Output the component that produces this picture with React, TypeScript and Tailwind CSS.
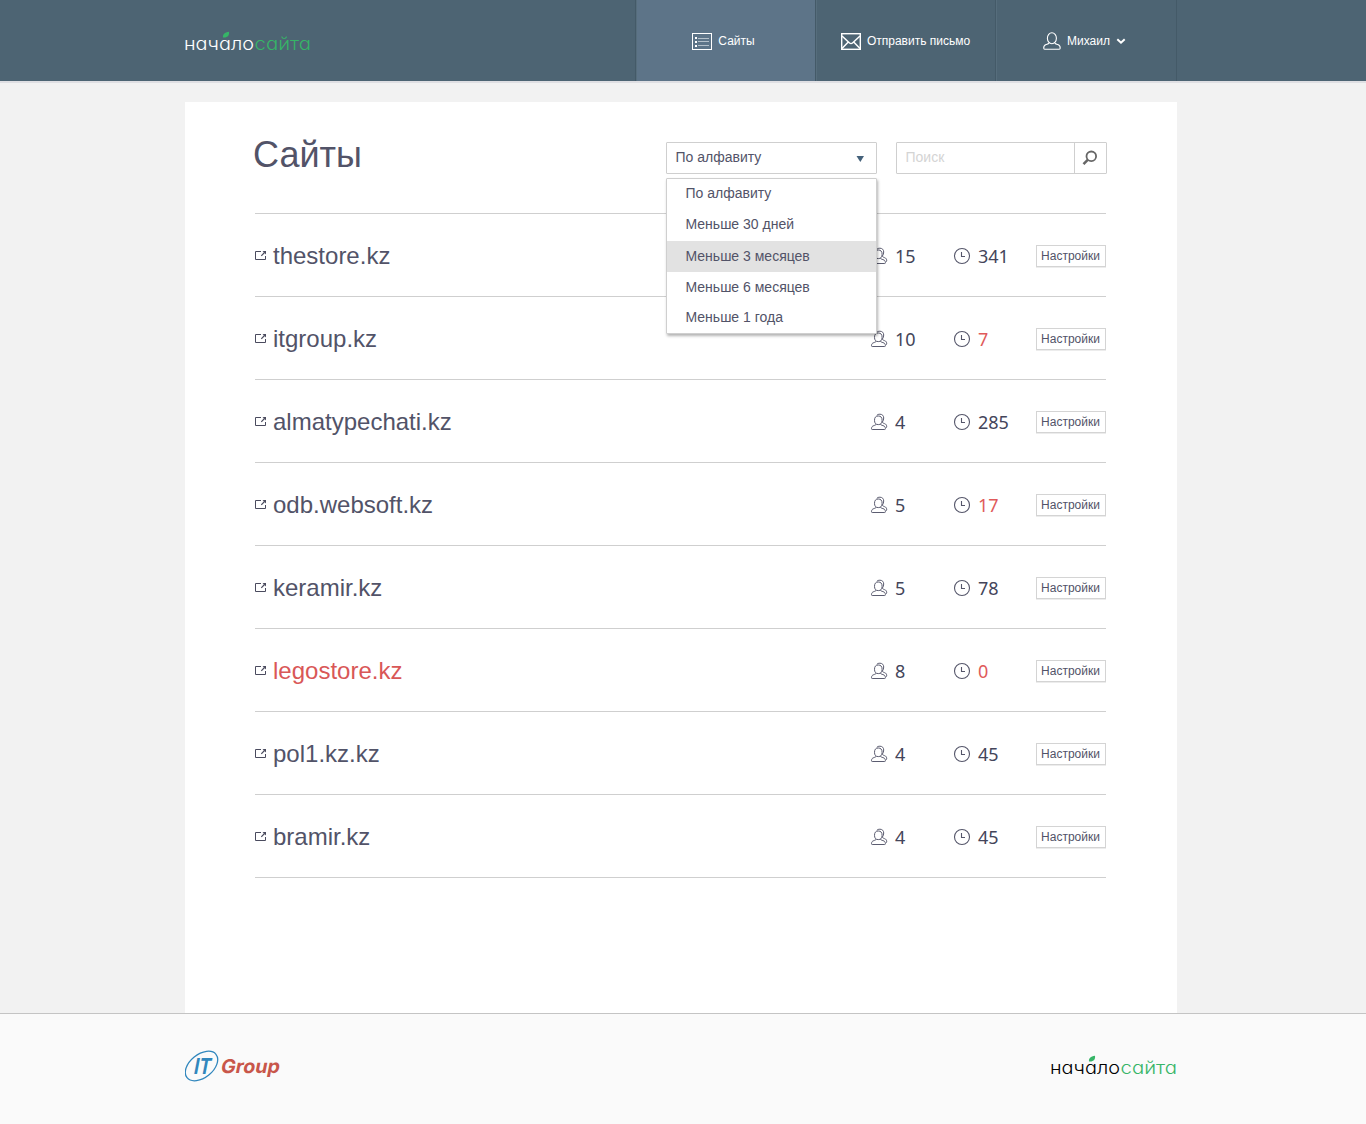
import type { ReactNode } from 'react';

type Site = { name: string; users: number; days: number };

const sites: Site[] = [
  { name: 'thestore.kz', users: 15, days: 341 },
  { name: 'itgroup.kz', users: 10, days: 7 },
  { name: 'almatypechati.kz', users: 4, days: 285 },
  { name: 'odb.websoft.kz', users: 5, days: 17 },
  { name: 'keramir.kz', users: 5, days: 78 },
  { name: 'legostore.kz', users: 8, days: 0 },
  { name: 'pol1.kz.kz', users: 4, days: 45 },
  { name: 'bramir.kz', users: 4, days: 45 },
];

const options = ['По алфавиту', 'Меньше 30 дней', 'Меньше 3 месяцев', 'Меньше 6 месяцев', 'Меньше 1 года'];
const highlighted = 2;

function SiteLogo({ className }: { className: string }) {
  return (
    <svg width="127" height="24" viewBox="0 0 127 24" className={`shrink-0 ${className}`}>
      <g className="font-['Inter',sans-serif] text-[17.5px] font-light [font-feature-settings:'cv11']">
        <text x="-1" y="20" textLength="70" lengthAdjust="spacingAndGlyphs" fill="currentColor">начало</text>
        <text x="69.5" y="20" textLength="56.5" lengthAdjust="spacingAndGlyphs" fill="#36b567">сайта</text>
      </g>
      <path d="M38 7.500C37.500 4.500 39.500 2.200 44 1.800C44.600 5.500 42.500 8 38 7.500Z" fill="#36b567" />
    </svg>
  );
}

function GroupLogo() {
  return (
    <svg width="96" height="32" viewBox="0 0 96 32" className="shrink-0">
      <ellipse cx="16.500" cy="16" rx="18.600" ry="11.600" transform="rotate(-39 16.500 16)" fill="none" stroke="#3187bd" strokeWidth="1.300" />
      <g className="font-['Inter',sans-serif] font-bold">
        <text x="8" y="0" transform="translate(0 23.500) skewX(-11)" textLength="17" lengthAdjust="spacingAndGlyphs" fill="#3187bd" className="text-[22px]">IT</text>
        <text x="35" y="0" transform="translate(0 23) skewX(-11)" textLength="59" lengthAdjust="spacingAndGlyphs" fill="#c8564a" className="text-[19px]">Group</text>
      </g>
    </svg>
  );
}

function ListIcon() {
  return (
    <svg width="20" height="17" viewBox="0 0 20 17" fill="none">
      <rect x=".5" y=".5" width="19" height="16" stroke="#fff" />
      <path d="M6 5.500H17M6 8.500H17M6 12.500H17" stroke="#b4c0ca" />
      <path d="M3 4H5V6H3ZM3 8H5V10H3ZM3 12H5V14H3Z" fill="#fff" />
    </svg>
  );
}

function MailIcon() {
  return (
    <svg width="20" height="17" viewBox="0 0 20 17" fill="none" stroke="#fff">
      <rect x=".7" y=".7" width="18.600" height="15.600" strokeWidth="1.400" />
      <path d="M1 3L8.500 10Q10 11.200 11.500 10L19 3M1 15.500L7.300 9M19 15.500L12.700 9" strokeWidth="1.500" />
    </svg>
  );
}

function UserIcon() {
  return (
    <svg width="18" height="18" viewBox="0 0 18 18" fill="none" stroke="#fff" strokeWidth="1.100">
      <ellipse cx="8.900" cy="6.300" rx="4.500" ry="5.500" />
      <path d="M6 10.800C5.800 11.800 4.600 12.100 3.200 12.500C1.300 13.100.7 14.300.7 16Q.7 17.200 1.700 17.200H16.200Q17.200 17.200 17.200 16C17.200 14.300 16.600 13.100 14.700 12.500C13.300 12.100 12 11.800 11.800 10.800" />
    </svg>
  );
}

function UsersIcon() {
  return (
    <svg width="18" height="18" viewBox="0 0 18 18" fill="none" stroke="#5b5c70" strokeWidth="1">
      <ellipse cx="8.300" cy="7.300" rx="3.800" ry="4.300" />
      <path d="M6.200 11C6 12 5 12.200 3.900 12.600C2.100 13.100 1.500 14.200 1.500 15.700Q1.500 16.500 2.200 16.500H14.700Q15.400 16.500 15.400 15.700C15.400 14.200 14.800 13.100 13 12.600C11.700 12.200 10.700 12 10.400 11" />
      <path d="M6.800 2.300C7.600 1.500 8.600 1.200 9.900 1.200C12.300 1.200 13.700 2.700 13.700 5C13.700 6.800 13.200 8 12.400 9C12.500 10 13.400 10.200 14.500 10.600C16.200 11.200 16.700 12.200 16.700 13.800Q16.700 14.600 15.900 14.600" />
    </svg>
  );
}

function ClockIcon() {
  return (
    <svg width="18" height="18" viewBox="0 0 18 18" fill="none" stroke="#55566a" strokeWidth="1.100">
      <circle cx="9" cy="9" r="7.500" />
      <path d="M8.500 5V9.500H12" />
    </svg>
  );
}

function ExternalIcon() {
  return (
    <svg width="11" height="9" viewBox="0 0 11 9" fill="none" stroke="#4a4b5e">
      <path d="M6 .5H.5V8.500H10.500V5" />
      <path d="M6.300 4.800L9.500 1.500" strokeWidth="1.200" />
      <path d="M7.500 0H11V3.500Z" fill="#4a4b5e" stroke="none" />
    </svg>
  );
}

function NavItem({ active, className, children }: { active?: boolean; className: string; children: ReactNode }) {
  return (
    <a
      className={`flex h-full w-[180px] items-center justify-center border-l border-l-[#566d7c] pt-px text-xs text-white shadow-[-1px_0_0_#445a68] ${className} ${
        active ? 'bg-[#5d7488]' : ''
      }`}
    >
      {children}
    </a>
  );
}

function SiteRow({ site }: { site: Site }) {
  return (
    <li className="flex h-[83px] items-center border-b border-[#cfcfcf] pt-px">
      <ExternalIcon />
      <span className={`ml-[7px] grow text-2xl ${site.days === 0 ? 'text-[#d95757]' : ''}`}>{site.name}</span>
      <div className="flex w-[83px] items-center font-['Noto_Sans',sans-serif] text-lg text-[#44455a]">
        <UsersIcon />
        <span className="ml-[7px]">{site.users}</span>
      </div>
      <div className="flex w-[83px] items-center font-['Noto_Sans',sans-serif] text-lg text-[#44455a]">
        <ClockIcon />
        <span className={`ml-[7px] ${site.days < 30 ? 'text-[#e05a5a]' : ''}`}>{site.days}</span>
      </div>
      <button className="h-[22px] w-[70px] border border-[#d4d4d4] pr-px text-xs whitespace-nowrap shadow-[0_1px_0_#ececec]">
        Настройки
      </button>
    </li>
  );
}

export default function App() {
  return (
    <div className="flex min-h-[1124px] flex-col bg-[#f2f2f2] font-['Liberation_Sans',Arial,sans-serif] text-[#525368]">
      <header className="h-[83px] border-b-2 border-[#dfdfe3] bg-[#4d6473]">
        <div className="ml-[185px] flex h-full w-[992px] items-start justify-between">
          <SiteLogo className="mt-[30px] text-white" />
          <nav className="flex h-full border-r border-[#445a68]">
            <NavItem active className="pr-1.5">
              <ListIcon />
              <span className="ml-1.5">Сайты</span>
            </NavItem>
            <NavItem className="pr-0.5">
              <MailIcon />
              <span className="ml-1.5">Отправить письмо</span>
            </NavItem>
            <NavItem className="pr-1">
              <UserIcon />
              <span className="ml-1.5">Михаил</span>
              <svg width="10" height="7" viewBox="0 0 10 7" className="ml-1.5" fill="none" stroke="#fff" strokeWidth="2">
                <path d="M1.300 1.300L5 4.700L8.700 1.300" />
              </svg>
            </NavItem>
          </nav>
        </div>
      </header>

      <main className="mt-[19px] ml-[185px] h-[911px] w-[992px] bg-white pr-[71px] pl-[70px]">
        <div className="flex h-[111px] items-start pt-10">
          <h1 className="-mt-[7px] -ml-0.5 grow text-4xl">Сайты</h1>
          <div className="relative w-[211px] text-sm">
            <button className="flex h-8 w-full items-center justify-between rounded-[1px] border border-[#cfcfcf] pr-3 pb-0.5 pl-[8.500px]">
              По алфавиту
              <svg width="8" height="6" viewBox="0 0 8 6" className="mt-1">
                <path d="M.5 0H8L4.300 6Z" fill="#44617a" />
              </svg>
            </button>
            <ul className="absolute top-9 left-0 w-full rounded-[1px] border border-[#cfcfcf] bg-white shadow-[1px_2px_3px_rgba(0,0,0,0.3)]">
              {options.map((option, i) => (
                <li
                  key={option}
                  className={`flex h-[31px] items-center pl-[18.500px] last:h-[30px] ${
                    i === highlighted ? 'bg-[#e2e2e2] pb-px' : i < highlighted ? 'pb-1' : 'pb-0.5'
                  }`}
                >
                  {option}
                </li>
              ))}
            </ul>
          </div>
          <div className="-mr-px ml-[19px] flex h-8 w-[211px] rounded-[1px] border border-[#cfcfcf]">
            <input
              placeholder="Поиск"
              className="min-w-0 grow pb-0.5 pl-[8.500px] text-sm outline-none placeholder:text-[#d4d4d4]"
            />
            <button className="flex w-8 shrink-0 items-center justify-center border-l border-[#cfcfcf] pr-0.5">
              <svg width="16" height="16" viewBox="0 0 16 16" fill="none" stroke="#666">
                <circle cx="9.300" cy="6.300" r="4.800" strokeWidth="1.800" />
                <path d="M5.700 9.900L1.500 14.100" strokeWidth="2.600" />
              </svg>
            </button>
          </div>
        </div>
        <ul className="border-t border-[#cfcfcf]">
          {sites.map((site) => (
            <SiteRow key={site.name} site={site} />
          ))}
        </ul>
      </main>

      <footer className="h-[111px] border-t border-[#c4c4c4] bg-[#fafafa]">
        <div className="ml-[185px] flex w-[993px] items-start justify-between pt-9">
          <GroupLogo />
          <SiteLogo className="mt-1 text-black" />
        </div>
      </footer>
    </div>
  );
}
